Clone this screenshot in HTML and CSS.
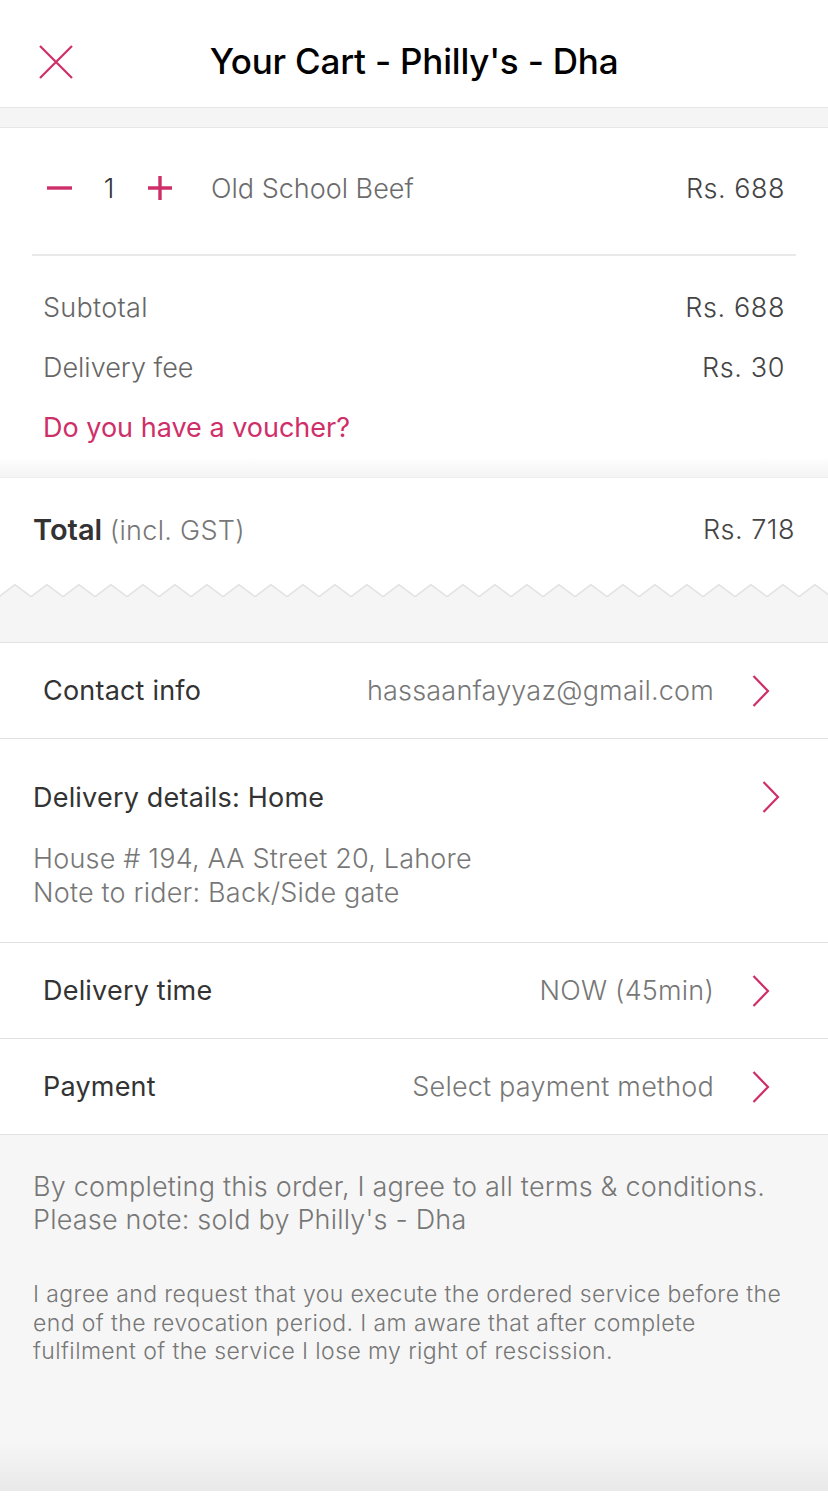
FILE: index.html
```html
<!DOCTYPE html>
<html>
<head>
<meta charset="utf-8">
<link rel="stylesheet" href="styles.css">
</head>
<body>
<div class="page">
  <header class="topbar">
    <svg class="close" width="34" height="34" viewBox="0 0 34 34"><path d="M1 1 L33 33 M33 1 L1 33" stroke="#cf2f69" stroke-width="2.2" fill="none"/></svg>
    <h1 class="title">Your Cart - Philly's - Dha</h1>
  </header>
  <div class="gapband"></div>

  <section class="cart">
    <div class="item">
      <svg class="qty-btn" width="30" height="30" viewBox="0 0 30 30"><path d="M4 15 H29" stroke="#cf2f69" stroke-width="3.4"/></svg>
      <span class="qty">1</span>
      <svg class="qty-btn" width="30" height="30" viewBox="0 0 30 30"><path d="M3 15 H27 M15 3 V27" stroke="#cf2f69" stroke-width="3.4"/></svg>
      <span class="item-name">Old School Beef</span>
      <span class="item-price">Rs. 688</span>
    </div>
    <div class="divider"></div>
    <div class="sum-row"><span>Subtotal</span><span class="sum-val">Rs. 688</span></div>
    <div class="sum-row"><span class="fee">Delivery fee</span><span class="sum-val">Rs. 30</span></div>
    <div class="sum-row"><span class="voucher">Do you have a voucher?</span></div>
  </section>
  <div class="fade"></div>

  <section class="total">
    <div class="total-label"><b>Total</b> <span class="incl">(incl. GST)</span></div>
    <div class="total-val">Rs. 718</div>
  </section>
  <div class="zigband">
    <svg class="zig" width="828" height="16" viewBox="0 0 828 16">
      <defs>
        <pattern id="teeth" x="-1" y="0" width="32" height="16" patternUnits="userSpaceOnUse">
          <path d="M0 0 H32 V12 L16 0 L0 12 Z" fill="#ffffff"/>
          <path d="M0 12.6 L16 0.6 L32 12.6" stroke="#e2e2e2" stroke-width="1.4" fill="none"/>
        </pattern>
      </defs>
      <rect x="0" y="0" width="828" height="16" fill="url(#teeth)"/>
    </svg>
  </div>

  <section class="details">
    <div class="row">
      <span class="row-label">Contact info</span>
      <span class="row-val">hassaanfayyaz@gmail.com</span>
      <svg class="chev" width="18" height="32" viewBox="0 0 18 32"><path d="M1.5 1 L16 16 L1.5 31" stroke="#cf2f69" stroke-width="2.2" fill="none"/></svg>
    </div>
    <div class="address">
      <div class="address-head">
        <span class="address-title">Delivery details: Home</span>
        <svg class="chev" width="18" height="32" viewBox="0 0 18 32"><path d="M1.5 1 L16 16 L1.5 31" stroke="#cf2f69" stroke-width="2.2" fill="none"/></svg>
      </div>
      <p class="address-text">House # 194, AA Street 20, Lahore<br>Note to rider: Back/Side gate</p>
    </div>
    <div class="row">
      <span class="row-label">Delivery time</span>
      <span class="row-val">NOW (45min)</span>
      <svg class="chev" width="18" height="32" viewBox="0 0 18 32"><path d="M1.5 1 L16 16 L1.5 31" stroke="#cf2f69" stroke-width="2.2" fill="none"/></svg>
    </div>
    <div class="row">
      <span class="row-label">Payment</span>
      <span class="row-val">Select payment method</span>
      <svg class="chev" width="18" height="32" viewBox="0 0 18 32"><path d="M1.5 1 L16 16 L1.5 31" stroke="#cf2f69" stroke-width="2.2" fill="none"/></svg>
    </div>
  </section>

  <footer class="terms">
    <p class="terms-main">By completing this order, I agree to all terms &amp; conditions.<br>Please note: sold by Philly's - Dha</p>
    <p class="terms-small">I agree and request that you execute the ordered service before the end of the revocation period. I am aware that after complete fulfilment of the service I lose my right of rescission.</p>
  </footer>
  <div class="bottom-shade"></div>
</div>
</body>
</html>
```

FILE: styles.css
```css
* { box-sizing: border-box; }
html, body { margin: 0; padding: 0; background: #ffffff; }
body {
  font-family: "Inter", "Noto Sans", "Liberation Sans", sans-serif;
  color: #333333;
  width: 828px;
}
.page { width: 828px; height: 1498px; overflow: hidden; display: flex; flex-direction: column; }

.topbar {
  height: 108px;
  border-bottom: 1px solid #e6e6e6;
  display: flex;
  align-items: center;
  justify-content: center;
  position: relative;
  padding-top: 15px;
}
.close { position: absolute; left: 39px; top: 45px; }
.title {
  margin: 0;
  font-size: 35px;
  font-weight: 500;
  color: #000000;
  letter-spacing: -0.2px;
}
.gapband {
  height: 20px;
  background: #f5f5f5;
  border-bottom: 1px solid #e6e6e6;
}

.cart { padding: 0 32px; background: #ffffff; }
.item {
  height: 120px;
  display: flex;
  align-items: center;
  padding: 0 11px;
  font-size: 27px;
}
.qty-btn { flex: none; }
.qty { width: 72px; text-align: center; color: #333333; font-weight: 300; }
.item-name { margin-left: 36px; color: #6b6b6b; font-weight: 300; flex: 1; }
.item-price { color: #444444; font-weight: 300; letter-spacing: 0.5px; }
.divider { height: 2px; background: #e9e9e9; margin-top: 6px; margin-bottom: 21px; }
.sum-row {
  height: 60px;
  display: flex;
  align-items: center;
  justify-content: space-between;
  padding: 0 11px;
  font-size: 27px;
  font-weight: 300;
  color: #666666;
  letter-spacing: 0.3px;
}
.fee { letter-spacing: 0; }
.sum-val { color: #444444; letter-spacing: 0.6px; }
.voucher { color: #cf2f69; font-weight: 400; letter-spacing: 0; }
.fade {
  height: 21px;
  background: linear-gradient(to bottom, #ffffff 0%, #f4f4f4 100%);
  border-bottom: 1px solid #eeeeee;
}

.total {
  height: 106px;
  padding: 0 33px 4px 33px;
  display: flex;
  align-items: center;
  justify-content: space-between;
  background: #ffffff;
  font-size: 27px;
}
.total-label b { font-weight: 600; color: #333333; font-size: 29px; }
.incl { color: #777777; font-weight: 300; letter-spacing: 0.3px; }
.total-val { color: #444444; font-weight: 300; letter-spacing: 0.5px; }

.zigband {
  height: 59px;
  background: #f5f5f5;
  border-bottom: 1px solid #e2e2e2;
}
.zig { display: block; }

.details { background: #ffffff; }
.row {
  height: 96px;
  display: flex;
  align-items: center;
  padding: 0 58px 0 43px;
  border-bottom: 1px solid #e2e2e2;
  font-size: 27px;
  letter-spacing: 0.2px;
}
.row-label { flex: 1; color: #333333; }
.row-val { color: #777777; font-weight: 300; margin-right: 38px; }
.chev { flex: none; }

.address {
  padding: 41px 48px 32px 33px;
  border-bottom: 1px solid #e2e2e2;
  font-size: 27px;
  letter-spacing: 0.2px;
}
.address-head {
  height: 34px;
  display: flex;
  align-items: center;
  justify-content: space-between;
}
.address-title { color: #333333; }
.address-text {
  margin: 28px 0 0 0;
  line-height: 34px;
  color: #777777;
  font-weight: 300;
}

.terms {
  flex: 1;
  background: #f6f6f6;
  padding: 35px 33px 0 33px;
  color: #777777;
  font-weight: 300;
}
.terms-main { margin: 0; font-size: 27px; line-height: 33px; letter-spacing: 0.2px; }
.terms-small { margin: 44px 0 0 0; font-size: 23px; line-height: 28.5px; letter-spacing: 0.4px; }
.bottom-shade {
  height: 57px;
  background: linear-gradient(to bottom, #f6f6f6 0%, #e9e9e9 88%, #ffffff 88%);
}
```
